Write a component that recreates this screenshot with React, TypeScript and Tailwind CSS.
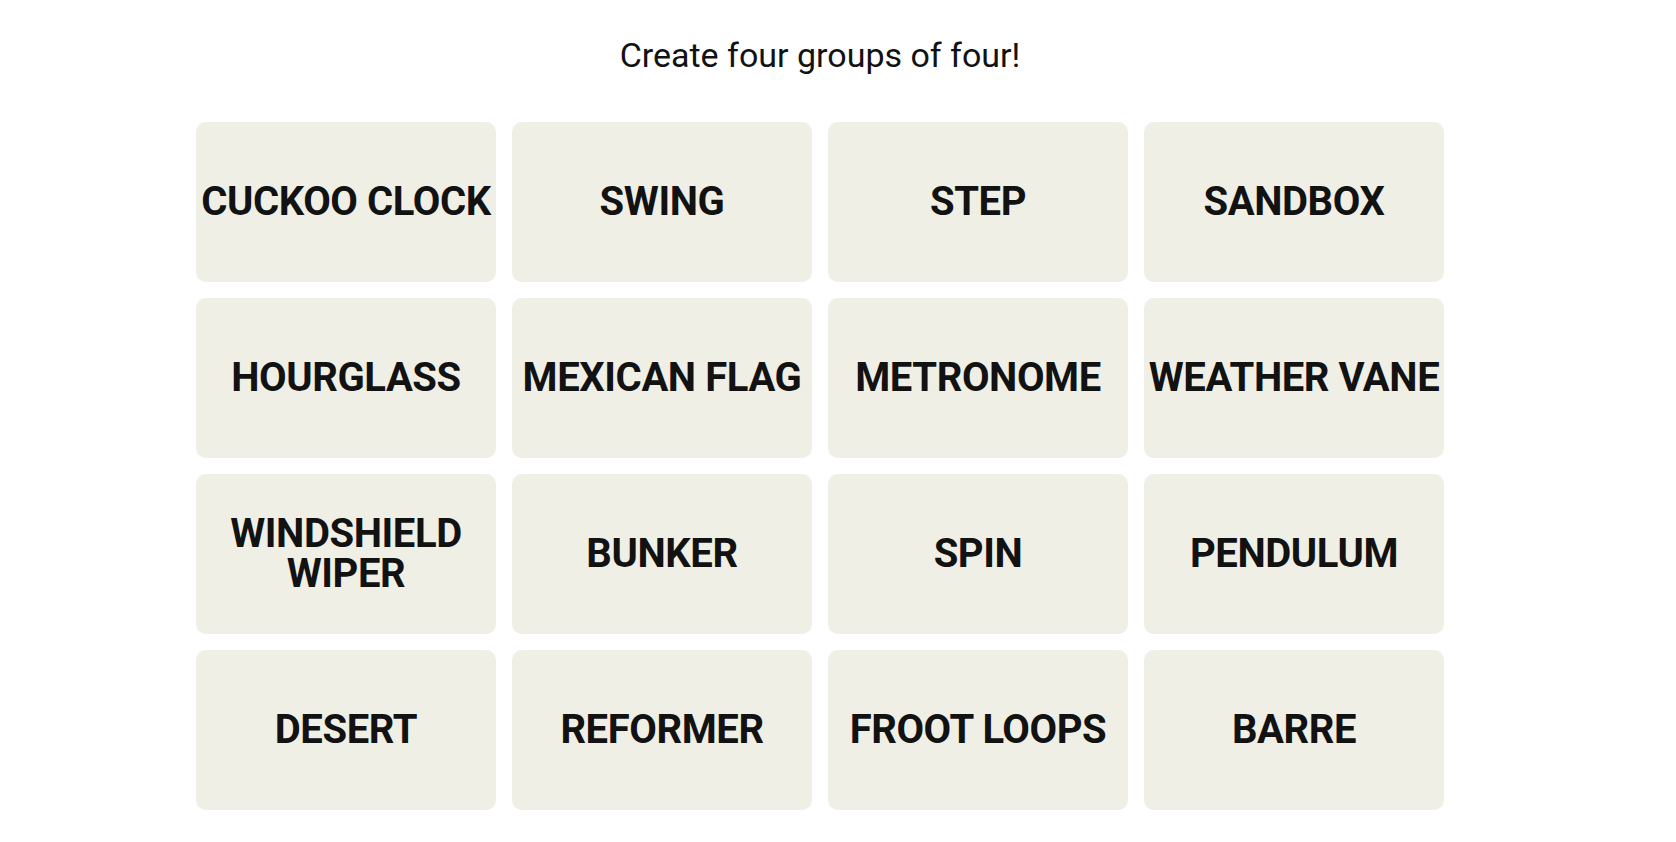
import React from 'react';

const words: string[] = [
  'CUCKOO CLOCK',
  'SWING',
  'STEP',
  'SANDBOX',
  'HOURGLASS',
  'MEXICAN FLAG',
  'METRONOME',
  'WEATHER VANE',
  'WINDSHIELD WIPER',
  'BUNKER',
  'SPIN',
  'PENDULUM',
  'DESERT',
  'REFORMER',
  'FROOT LOOPS',
  'BARRE',
];

const Tile: React.FC<{ word: string }> = ({ word }) => (
  <button
    type="button"
    className="flex items-center justify-center rounded-[10px] bg-[#efefe6] text-center text-[40px] font-bold leading-[40px] tracking-[-0.4px] text-[#121212]"
  >
    {word}
  </button>
);

export default function App() {
  return (
    <div
      className="min-h-screen bg-white pr-[36px]"
      style={{ fontFamily: 'Roboto, "Liberation Sans", sans-serif' }}
    >
      <div className="flex flex-col items-center pt-[35px]">
        <p className="mb-[47px] text-[34px] leading-[40px] font-normal text-[#121212]">
          Create four groups of four!
        </p>
        <div className="grid grid-cols-[repeat(4,300px)] auto-rows-[160px] gap-4">
          {words.map((w) => (
            <Tile key={w} word={w} />
          ))}
        </div>
      </div>
    </div>
  );
}
